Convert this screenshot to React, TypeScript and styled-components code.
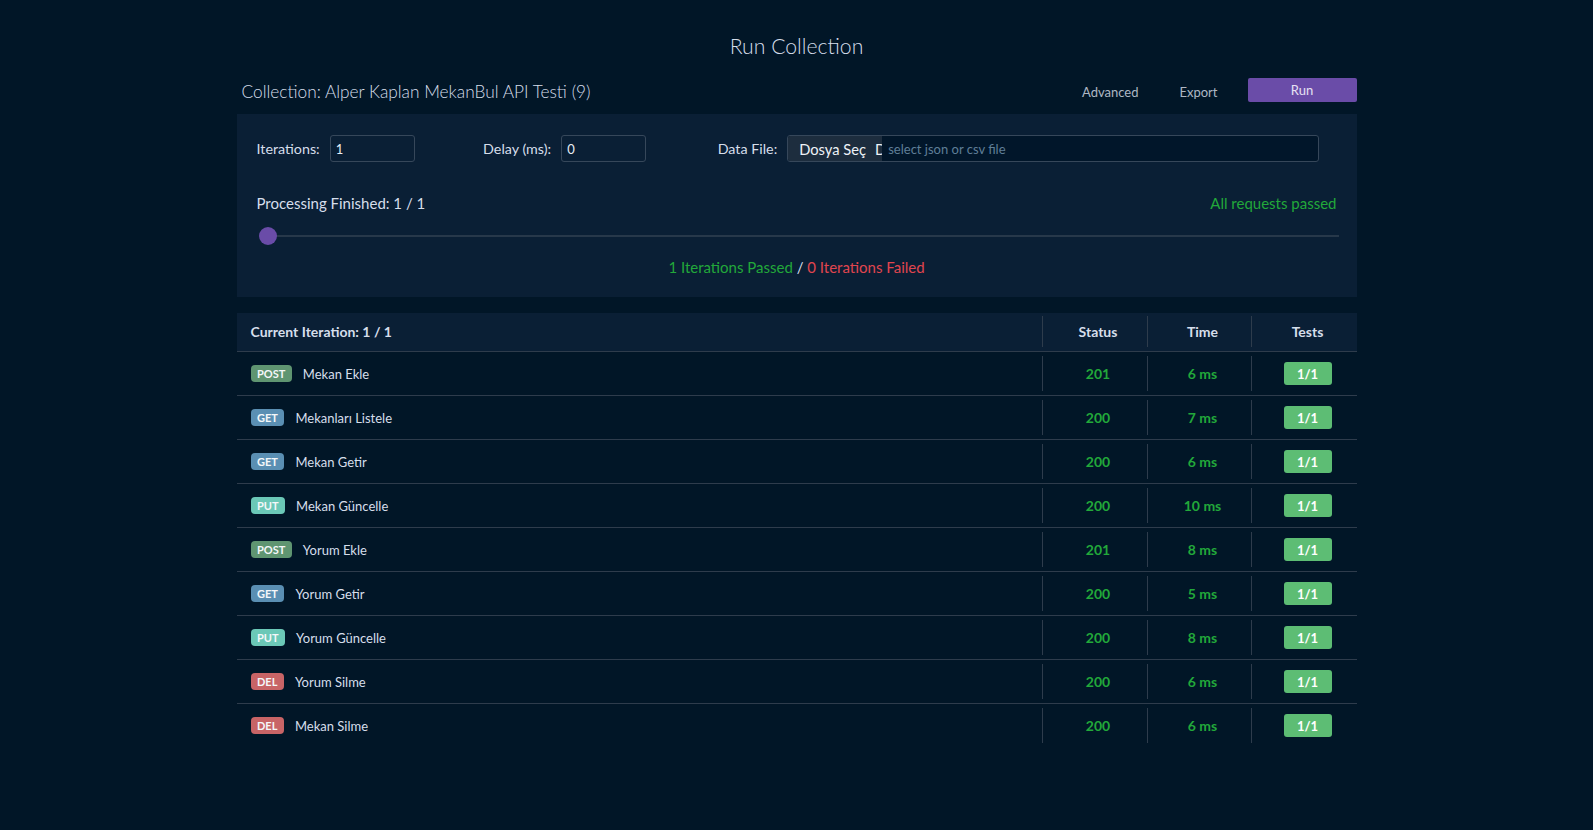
import React from "react";
import styled, { createGlobalStyle } from "styled-components";

const GlobalStyle = createGlobalStyle`
  html, body { margin: 0; padding: 0; background: #011627; }
  body { font-family: Lato, "Open Sans", sans-serif; color: #d6deeb; }
  * { box-sizing: border-box; }
`;

const Page = styled.div`
  padding-top: 30px;
  min-height: 830px;
`;

const Title = styled.h2`
  margin: 0 0 15px;
  text-align: center;
  font-size: 21.2px;
  font-weight: 300;
  line-height: 32px;
  color: #d6deeb;
`;

const Container = styled.div`
  width: 1120px;
  margin: 0 auto;
`;

const TopBar = styled.div`
  display: flex;
  align-items: center;
  height: 26px;
  padding-left: 5px;
`;

const CollectionName = styled.div`
  flex: 1;
  font-size: 17.3px;
  font-weight: 300;
  color: #d6deeb;
  padding-top: 2px;
`;

const LinkButton = styled.button<{ $gap: number }>`
  background: none;
  border: none;
  color: #aeb8c4;
  font-family: Lato, sans-serif;
  font-size: 13px;
  padding: 0;
  margin-right: ${(p) => p.$gap}px;
  margin-top: 4px;
`;

const RunButton = styled.button`
  width: 109px;
  height: 24px;
  background: #6a4ca8;
  border: none;
  border-radius: 2px;
  color: #e6e0f3;
  font-family: Lato, sans-serif;
  font-size: 13px;
`;

const Panel = styled.div`
  margin-top: 11px;
  background: #0a1f35;
  padding: 21px 20px 20px;
`;

const FormRow = styled.div`
  display: flex;
  align-items: center;
  height: 27px;
`;

const Field = styled.div<{ $width: number }>`
  display: flex;
  align-items: center;
  width: ${(p) => p.$width}px;
`;

const Label = styled.span`
  font-size: 14.3px;
  color: #d6deeb;
  margin-right: 10px;
`;

const NumInput = styled.div`
  width: 85px;
  height: 27px;
  border: 1px solid #36475a;
  border-radius: 3px;
  font-size: 13px;
  color: #e8eef5;
  display: flex;
  align-items: center;
  padding-left: 5px;
`;

const FileInput = styled.div`
  display: flex;
  align-items: stretch;
  width: 532px;
  height: 27px;
  border: 1px solid #36475a;
  border-radius: 3px;
  overflow: hidden;
  background: #01162a;
`;

const FileButton = styled.div`
  width: 94px;
  flex-shrink: 0;
  background: #1d2d3e;
  display: flex;
  align-items: center;
  padding-left: 11px;
  font-size: 14.7px;
  color: #eef2f7;
  white-space: nowrap;
  overflow: hidden;
  gap: 9px;
`;

const Placeholder = styled.div`
  display: flex;
  align-items: center;
  padding-left: 6px;
  font-size: 13px;
  color: #5f7e97;
`;

const StatusRow = styled.div`
  display: flex;
  justify-content: space-between;
  align-items: center;
  margin-top: 31px;
  height: 20px;
`;

const StatusText = styled.span<{ $color?: string }>`
  font-size: 15px;
  color: ${(p) => p.$color || "#d6deeb"};
`;

const Slider = styled.div`
  margin-top: 13px;
  height: 20px;
  display: flex;
  align-items: center;
  position: relative;
`;

const Track = styled.div`
  flex: 1;
  height: 2px;
  background: #27384a;
  margin-left: 4px;
  margin-right: -2px;
`;

const Thumb = styled.div`
  position: absolute;
  left: 2px;
  top: 1px;
  width: 18px;
  height: 18px;
  border-radius: 50%;
  background: #6a4ca8;
`;

const Summary = styled.div`
  text-align: center;
  margin-top: 11px;
  font-size: 15px;
  line-height: 20px;
`;

const Green = styled.span`
  color: #22a83a;
`;
const Red = styled.span`
  color: #e0454f;
`;
const Slash = styled.span`
  color: #d6deeb;
`;

const Table = styled.table`
  width: 100%;
  margin-top: 16px;
  border-collapse: collapse;
  table-layout: fixed;
`;

const HeadRow = styled.tr`
  background: #0a1f35;
  border-bottom: 1px solid #2e3c4c;
`;

const BodyRow = styled.tr<{ $last?: boolean }>`
  border-bottom: ${(p) => (p.$last ? "none" : "1px solid #2e3c4c")};
`;

const Th = styled.th<{ $w?: number }>`
  width: ${(p) => (p.$w ? `${p.$w}px` : "auto")};
  padding: 3px 0 4px;
  font-weight: 700;
  font-size: 14px;
  color: #d6deeb;
  text-align: left;
`;

const Td = styled.td`
  padding: 4px 0;
`;

const CellBox = styled.div<{ $divider?: boolean; $h: number }>`
  height: ${(p) => p.$h}px;
  display: flex;
  align-items: center;
  justify-content: ${(p) => (p.$divider ? "center" : "flex-start")};
  border-left: ${(p) => (p.$divider ? "1px solid #2e3c4c" : "none")};
  padding-left: ${(p) => (p.$divider ? 7 : 14)}px;
`;

const methodColors: Record<string, string> = {
  POST: "#5f9571",
  GET: "#5a8fb3",
  PUT: "#6bc8b7",
  DEL: "#c86466",
};

const Method = styled.span<{ $m: string }>`
  background: ${(p) => methodColors[p.$m]};
  color: #f4f7f9;
  font-weight: 700;
  font-size: 11px;
  border-radius: 4px;
  height: 17px;
  padding: 0 6.5px;
  display: inline-flex;
  align-items: center;
  margin-right: 11px;
`;

const ReqName = styled.span`
  font-size: 13px;
  color: #d6deeb;
`;

const Metric = styled.span`
  font-size: 14px;
  font-weight: 700;
  color: #22a83a;
`;

const TestBadge = styled.span`
  width: 48px;
  height: 23px;
  border-radius: 3px;
  background: #5dbd74;
  color: #ffffff;
  font-weight: 700;
  font-size: 13px;
  display: inline-flex;
  align-items: center;
  justify-content: center;
`;

const rows = [
  { m: "POST", name: "Mekan Ekle", status: 201, time: 6 },
  { m: "GET", name: "Mekanları Listele", status: 200, time: 7 },
  { m: "GET", name: "Mekan Getir", status: 200, time: 6 },
  { m: "PUT", name: "Mekan Güncelle", status: 200, time: 10 },
  { m: "POST", name: "Yorum Ekle", status: 201, time: 8 },
  { m: "GET", name: "Yorum Getir", status: 200, time: 5 },
  { m: "PUT", name: "Yorum Güncelle", status: 200, time: 8 },
  { m: "DEL", name: "Yorum Silme", status: 200, time: 6 },
  { m: "DEL", name: "Mekan Silme", status: 200, time: 6 },
];

export default function App() {
  return (
    <>
      <GlobalStyle />
      <Page>
        <Title>Run Collection</Title>
        <Container>
          <TopBar>
            <CollectionName>Collection: Alper Kaplan MekanBul API Testi (9)</CollectionName>
            <LinkButton $gap={41}>Advanced</LinkButton>
            <LinkButton $gap={30}>Export</LinkButton>
            <RunButton>Run</RunButton>
          </TopBar>
          <Panel>
            <FormRow>
              <Field $width={227}>
                <Label>Iterations:</Label>
                <NumInput>1</NumInput>
              </Field>
              <Field $width={235}>
                <Label>Delay (ms):</Label>
                <NumInput>0</NumInput>
              </Field>
              <Field $width={620}>
                <Label>Data File:</Label>
                <FileInput>
                  <FileButton>
                    <span>Dosya Seç</span>
                    <span>Dosya seçilmedi</span>
                  </FileButton>
                  <Placeholder>select json or csv file</Placeholder>
                </FileInput>
              </Field>
            </FormRow>
            <StatusRow>
              <StatusText>Processing Finished: 1 / 1</StatusText>
              <StatusText $color="#22a83a">All requests passed</StatusText>
            </StatusRow>
            <Slider>
              <Track />
              <Thumb />
            </Slider>
            <Summary>
              <Green>1 Iterations Passed</Green> <Slash>/</Slash> <Red>0 Iterations Failed</Red>
            </Summary>
          </Panel>
          <Table>
            <thead>
              <HeadRow>
                <Th>
                  <CellBox $h={31}>Current Iteration: 1 / 1</CellBox>
                </Th>
                <Th $w={105}>
                  <CellBox $h={31} $divider>Status</CellBox>
                </Th>
                <Th $w={104}>
                  <CellBox $h={31} $divider>Time</CellBox>
                </Th>
                <Th $w={106}>
                  <CellBox $h={31} $divider>Tests</CellBox>
                </Th>
              </HeadRow>
            </thead>
            <tbody>
              {rows.map((r, i) => (
                <BodyRow key={i} $last={i === rows.length - 1}>
                  <Td>
                    <CellBox $h={35}>
                      <Method $m={r.m}>{r.m}</Method>
                      <ReqName>{r.name}</ReqName>
                    </CellBox>
                  </Td>
                  <Td>
                    <CellBox $h={35} $divider>
                      <Metric>{r.status}</Metric>
                    </CellBox>
                  </Td>
                  <Td>
                    <CellBox $h={35} $divider>
                      <Metric>{r.time} ms</Metric>
                    </CellBox>
                  </Td>
                  <Td>
                    <CellBox $h={35} $divider>
                      <TestBadge>1/1</TestBadge>
                    </CellBox>
                  </Td>
                </BodyRow>
              ))}
            </tbody>
          </Table>
        </Container>
      </Page>
    </>
  );
}
